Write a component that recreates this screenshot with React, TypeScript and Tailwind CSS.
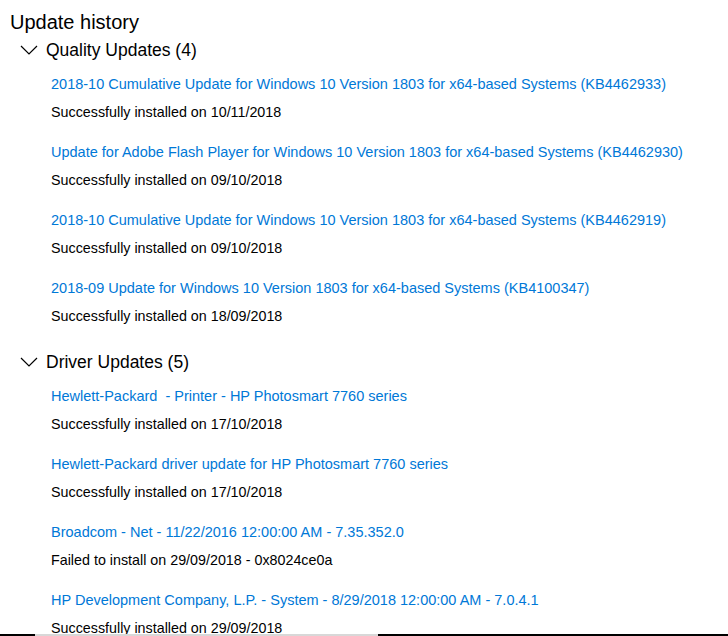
import React from 'react';

// ---------- Types ----------
interface UpdateItem {
  title: string;
  status: string;
}

interface UpdateGroup {
  name: string;
  items: UpdateItem[];
}

// ---------- Data ----------
const groups: UpdateGroup[] = [
  {
    name: 'Quality Updates (4)',
    items: [
      { title: '2018-10 Cumulative Update for Windows 10 Version 1803 for x64-based Systems (KB4462933)', status: 'Successfully installed on 10/11/2018' },
      { title: 'Update for Adobe Flash Player for Windows 10 Version 1803 for x64-based Systems (KB4462930)', status: 'Successfully installed on 09/10/2018' },
      { title: '2018-10 Cumulative Update for Windows 10 Version 1803 for x64-based Systems (KB4462919)', status: 'Successfully installed on 09/10/2018' },
      { title: '2018-09 Update for Windows 10 Version 1803 for x64-based Systems (KB4100347)', status: 'Successfully installed on 18/09/2018' },
    ],
  },
  {
    name: 'Driver Updates (5)',
    items: [
      { title: 'Hewlett-Packard\u00a0 - Printer - HP Photosmart 7760 series', status: 'Successfully installed on 17/10/2018' },
      { title: 'Hewlett-Packard driver update for HP Photosmart 7760 series', status: 'Successfully installed on 17/10/2018' },
      { title: 'Broadcom - Net - 11/22/2016 12:00:00 AM - 7.35.352.0', status: 'Failed to install on 29/09/2018 - 0x8024ce0a' },
      { title: 'HP Development Company, L.P. - System - 8/29/2018 12:00:00 AM - 7.0.4.1', status: 'Successfully installed on 29/09/2018' },
    ],
  },
];

const Chevron = () => (
  <svg width="18" height="10" viewBox="0 0 18 10" className="shrink-0">
    <path d="M1 1 L9 9 L17 1" fill="none" stroke="#000" strokeWidth="1.2" />
  </svg>
);

// ---------- Page ----------
export default function App() {
  return (
    <main
      className="relative h-[636px] w-[728px] overflow-hidden bg-white text-black"
      style={{ fontFamily: '"Liberation Sans", Arial, sans-serif' }}
    >
      <div className="pt-[8px]">
        <h1 className="pl-[10px] text-[20px] leading-[28px] font-normal">Update history</h1>

        {groups.map((g) => (
          <section key={g.name} className="pb-[6px]">
            <div className="flex h-[28px] items-center gap-[8px] pl-[20px]">
              <Chevron />
              <span className="text-[17.5px]">{g.name}</span>
            </div>
            <ul className="flex flex-col gap-[12px] pt-[6px] pb-[12px] pl-[51px]">
              {g.items.map((it) => (
                <li key={it.title} className="leading-[28px]">
                  <div className="whitespace-nowrap text-[14.5px] text-[#0078d7]">{it.title}</div>
                  <div className="whitespace-nowrap text-[14.3px]">{it.status}</div>
                </li>
              ))}
            </ul>
          </section>
        ))}
      </div>

      {/* cropped bottom edge of the screenshot */}
      <div className="absolute bottom-0 left-0 flex h-[2px] w-full">
        <div className="w-[35px] bg-black" />
        <div className="w-[343px] bg-[#d8d8d8]" />
        <div className="flex-1 bg-black" />
      </div>
    </main>
  );
}
